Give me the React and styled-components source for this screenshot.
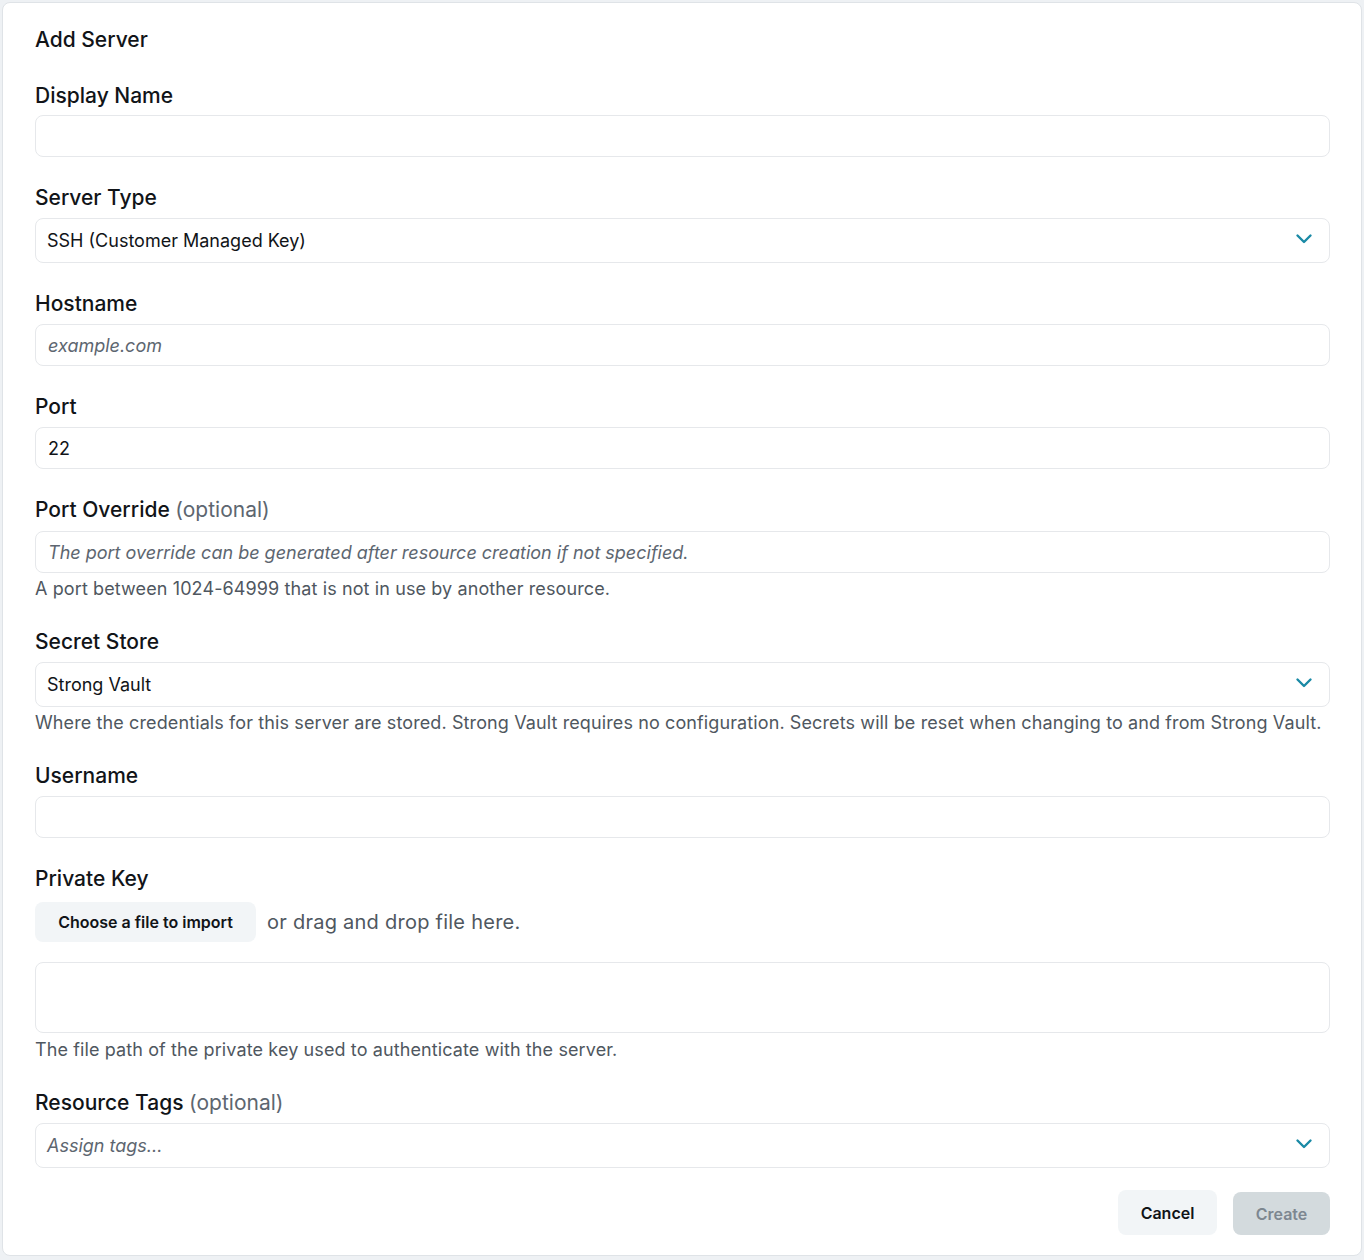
import React from "react";
import styled, { createGlobalStyle } from "styled-components";

const GlobalStyle = createGlobalStyle`
  html, body {
    margin: 0;
    padding: 0;
    background: #eef1f4;
  }
  body {
    font-family: Inter, "Noto Sans", sans-serif;
    color: #111418;
  }
  * { box-sizing: border-box; }
`;

const Page = styled.div`
  padding: 2px;
  min-height: 1260px;
`;

const Card = styled.form`
  background: #fff;
  border: 1px solid #dfe3e7;
  border-radius: 8px;
  padding: 23px 31px 20px 32px;
  display: flex;
  flex-direction: column;
  gap: 26px;
`;

const Title = styled.h2`
  margin: 0 0 1px;
  font-size: 21px;
  line-height: 28px;
  font-weight: 500;
`;

const Field = styled.div`
  display: flex;
  flex-direction: column;
`;

const Label = styled.label`
  font-size: 21px;
  line-height: 28px;
  font-weight: 500;
  padding-top: 1px;
  margin-bottom: ${p => (p.$gap || 7) - 1}px;
`;

const Optional = styled.span`
  font-weight: 400;
  color: #5d6670;
`;

const Input = styled.input`
  height: 42px;
  border: 1px solid #e6e8eb;
  border-radius: 8px;
  padding: 0 12px;
  font-family: inherit;
  font-size: 18px;
  color: #111418;
  background: #fff;
  outline: none;
  &::placeholder {
    color: #5d6670;
    font-style: italic;
  }
`;

const TextArea = styled.textarea`
  height: 71px;
  border: 1px solid #e6e8eb;
  border-radius: 8px;
  padding: 10px 12px;
  font-family: inherit;
  font-size: 18px;
  resize: none;
  outline: none;
`;

const SelectBox = styled.div`
  height: 45px;
  border: 1px solid #e6e8eb;
  border-radius: 8px;
  padding: 0 16px 0 11px;
  display: flex;
  align-items: center;
  justify-content: space-between;
  font-size: 18px;
`;

const SelectValue = styled.span`
  color: ${p => (p.$placeholder ? "#5d6670" : "#111418")};
  font-style: ${p => (p.$placeholder ? "italic" : "normal")};
`;

const ChevronIcon = styled.svg`
  margin-bottom: 3px;
  flex: none;
`;

const Help = styled.div`
  font-size: 18px;
  line-height: 26px;
  letter-spacing: 0.11px;
  color: #4f5760;
  margin-top: ${p => p.$mt || 3}px;
  margin-bottom: -1px;
`;

const FileRow = styled.div`
  display: flex;
  align-items: center;
  gap: 11px;
  margin-bottom: 20px;
`;

const FileButton = styled.button`
  height: 40px;
  width: 221px;
  padding: 0;
  border: none;
  border-radius: 8px;
  background: #f2f5f7;
  font-family: inherit;
  font-size: 16px;
  font-weight: 600;
  color: #111418;
`;

const DropText = styled.span`
  font-size: 20px;
  letter-spacing: 0.25px;
  color: #4f5760;
`;

const Actions = styled.div`
  display: flex;
  justify-content: flex-end;
  align-items: flex-start;
  gap: 16px;
  margin-top: -4px;
`;

const Button = styled.button`
  height: ${p => (p.$primary ? 43 : 45)}px;
  width: ${p => (p.$primary ? 97 : 99)}px;
  padding: 0;
  border: none;
  border-radius: 8px;
  font-family: inherit;
  font-size: 16px;
  font-weight: 600;
  background: ${p => (p.$primary ? "#d3dadd" : "#f2f5f7")};
  color: ${p => (p.$primary ? "#7d8790" : "#111418")};
  margin-top: ${p => (p.$primary ? 2 : 0)}px;
`;

const Chevron = () => (
  <ChevronIcon width="18" height="12" viewBox="0 0 18 12" fill="none" stroke="#1a8aa6" strokeWidth="2.4" strokeLinecap="round" strokeLinejoin="round">
    <path d="M2.5 2.5l6.5 6.5 6.5-6.5" />
  </ChevronIcon>
);

function Select({ value, placeholder }) {
  return (
    <SelectBox>
      <SelectValue $placeholder={!value}>{value || placeholder}</SelectValue>
      <Chevron />
    </SelectBox>
  );
}

export default function App() {
  return (
    <Page>
      <GlobalStyle />
      <Card onSubmit={e => e.preventDefault()}>
        <Title>Add Server</Title>

        <Field>
          <Label $gap={6}>Display Name</Label>
          <Input />
        </Field>

        <Field>
          <Label>Server Type</Label>
          <Select value="SSH (Customer Managed Key)" />
        </Field>

        <Field>
          <Label>Hostname</Label>
          <Input placeholder="example.com" />
        </Field>

        <Field>
          <Label>Port</Label>
          <Input defaultValue="22" />
        </Field>

        <Field>
          <Label $gap={8}>
            Port Override <Optional>(optional)</Optional>
          </Label>
          <Input placeholder="The port override can be generated after resource creation if not specified." />
          <Help>A port between 1024-64999 that is not in use by another resource.</Help>
        </Field>

        <Field>
          <Label>Secret Store</Label>
          <Select value="Strong Vault" />
          <Help>
            Where the credentials for this server are stored. Strong Vault requires no configuration. Secrets will be reset when changing to and from Strong Vault.
          </Help>
        </Field>

        <Field>
          <Label>Username</Label>
          <Input />
        </Field>

        <Field>
          <Label $gap={10}>Private Key</Label>
          <FileRow>
            <FileButton type="button">Choose a file to import</FileButton>
            <DropText>or drag and drop file here.</DropText>
          </FileRow>
          <TextArea />
          <Help $mt={4}>The file path of the private key used to authenticate with the server.</Help>
        </Field>

        <Field>
          <Label>
            Resource Tags <Optional>(optional)</Optional>
          </Label>
          <Select placeholder="Assign tags..." />
        </Field>

        <Actions>
          <Button type="button">Cancel</Button>
          <Button type="button" $primary disabled>Create</Button>
        </Actions>
      </Card>
    </Page>
  );
}
